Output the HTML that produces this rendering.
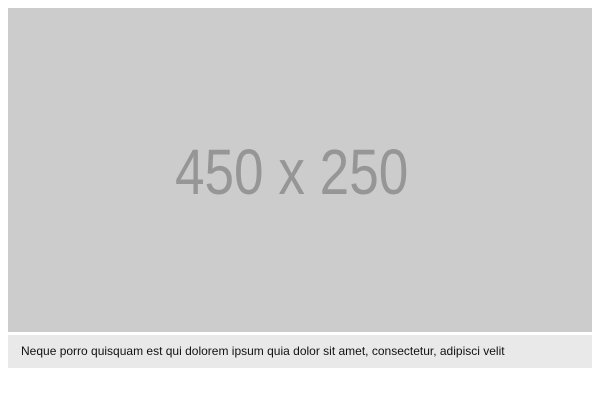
<!DOCTYPE html>
<html><head><style>
body{margin:0;width:600px;height:400px;background:#fff;position:relative;overflow:hidden;font-family:"Liberation Sans",Arial,sans-serif}
.img{position:absolute;left:8px;top:8px;width:584px;height:324px;background:#cccccc}
.t{position:absolute;left:-7px;width:600px;top:136px;text-align:center;font-size:64px;line-height:72px;color:#969696;transform:scaleX(0.83);transform-origin:292px 0}
.cap{position:absolute;left:8px;top:335px;width:584px;height:33px;background:#e9e9e9;font-size:12px;color:#111}
.cap span{position:absolute;left:13px;top:9px}
</style></head><body>
<div class="img"></div>
<div class="t">450 x 250</div>
<div class="cap"><span>Neque porro quisquam est qui dolorem ipsum quia dolor sit amet, consectetur, adipisci velit</span></div>
</body></html>
